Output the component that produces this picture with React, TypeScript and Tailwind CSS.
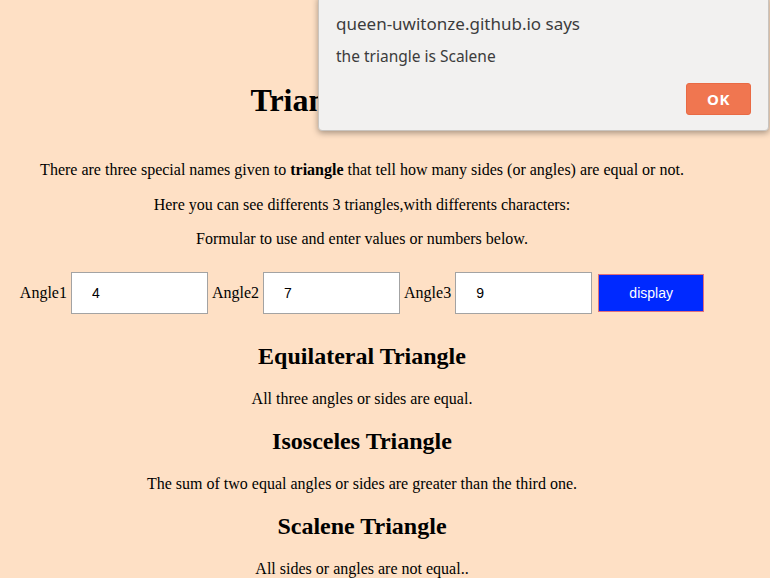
import { type ReactNode } from "react";

const serif = "font-['Liberation_Serif','Times_New_Roman',serif]";
const sans = "font-['Liberation_Sans',Arial,sans-serif]";

function AngleField({ label, value }: { label: string; value: string }) {
  return (
    <>
      <span className="text-base leading-[18px]">{label}</span>
      <input
        readOnly
        value={value}
        className={`${sans} h-[42px] w-[137px] border border-[#a3a3a3] bg-white pl-[20px] text-[14px] text-black outline-none`}
      />
    </>
  );
}

function Section({ title, children }: { title: string; children: ReactNode }) {
  return (
    <>
      <h2 className="mb-[20px] text-[24px] font-bold leading-[27px]">{title}</h2>
      <p className="mb-[20px] text-base leading-[18px]">{children}</p>
    </>
  );
}

function AlertDialog() {
  return (
    <div className="absolute left-[318px] top-[-4px] w-[451px] rounded-b-[4px] border border-[#c9c4bf] bg-[#f2f1f0] pb-[15px] pl-[17px] pr-[17px] pt-[15px] shadow-[0_2px_6px_rgba(0,0,0,0.35)] font-['Noto_Sans','Open_Sans',sans-serif] text-[#3c3c3c]">
      <div className="text-[17px] leading-[24px]">queen-uwitonze.github.io says</div>
      <div className="mt-[8px] text-[15.5px] leading-[24px]">the triangle is Scalene</div>
      <div className="mt-[15px] flex justify-end">
        <button className="h-[32px] w-[65px] rounded-[3px] border border-[#e96a44] bg-[#f07650] text-[15px] font-bold tracking-[0.5px] text-white">
          OK
        </button>
      </div>
    </div>
  );
}

export default function App() {
  return (
    <div className={`${serif} relative min-h-[578px] overflow-hidden bg-[#fee0c5] text-black`}>
      <div className="w-[724px] pt-[82px] text-center">
        <h1 className="text-[32px] font-bold leading-[37px]">Triangles' Types</h1>
        <p className="mt-[42px] text-base leading-[18px]">
          There are three special names given to <b>triangle</b> that tell how many sides (or angles) are equal or not.
        </p>
        <p className="mt-[17px] text-base leading-[18px]">
          Here you can see differents 3 triangles,with differents characters:
        </p>
        <p className="mt-[16px] text-base leading-[18px]">Formular to use and enter values or numbers below.</p>

        <div className="mt-[24px] flex items-center justify-center gap-[4px]">
          <AngleField label="Angle1" value="4" />
          <AngleField label="Angle2" value="7" />
          <AngleField label="Angle3" value="9" />
          <button
            className={`${sans} ml-[2px] h-[38px] w-[106px] border border-[#e0707a] bg-[#0029ff] text-[14px] text-white`}
          >
            display
          </button>
        </div>

        <div className="mt-[29px]">
          <Section title="Equilateral Triangle">All three angles or sides are equal.</Section>
          <Section title="Isosceles Triangle">
            The sum of two equal angles or sides are greater than the third one.
          </Section>
          <Section title="Scalene Triangle">All sides or angles are not equal..</Section>
        </div>
      </div>
      <AlertDialog />
    </div>
  );
}
